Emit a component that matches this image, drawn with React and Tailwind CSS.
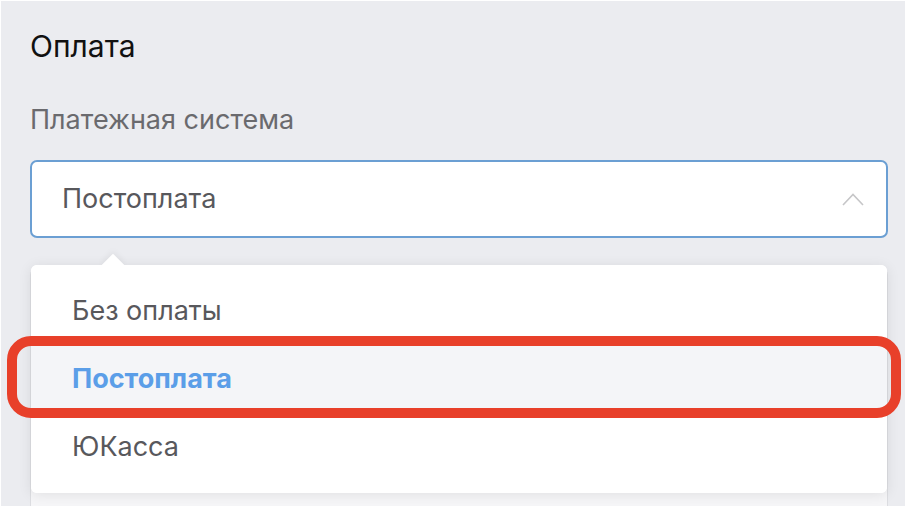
import React from 'react';

const options = ['Без оплаты', 'Постоплата', 'ЮКасса'];

const App = () => {
    const selected = 'Постоплата';

    return (
        <div
            className="h-[506px] w-[908px] overflow-hidden bg-white pt-px pr-[3px] pl-px"
            style={{ fontFamily: 'Inter, "Noto Sans", sans-serif' }}
        >
            <div className="relative h-full bg-[#ebecf0] pl-[29px] pr-[17px]">
                <h2 className="pt-[28px] text-[30px] leading-[34px] text-[#111]">Оплата</h2>

                <div className="mt-[41px] text-[27px] leading-[32px] text-[#6a6a6e]">Платежная система</div>

                {/* select */}
                <div className="mt-[24px] flex h-[78px] items-center justify-between rounded-[7px] border-2 border-[#6b9fd3] bg-white pl-[30px] pr-[22px]">
                    <span className="text-[27px] text-[#58585c]">{selected}</span>
                    <svg width="22" height="13" viewBox="0 0 22 13" fill="none">
                        <polyline points="1,12 11,1.5 21,12" stroke="#c6c6c8" strokeWidth="1.6" />
                    </svg>
                </div>

                {/* field underneath the dropdown */}
                <div className="mt-[30px] h-[300px] rounded-[7px] border border-[#dcdde1] bg-[#f6f6f8]"></div>

                {/* dropdown */}
                <div className="absolute left-[30px] top-[264px] w-[856px] rounded-[6px] bg-white shadow-[0_2px_14px_rgba(0,0,0,0.09)]">
                    <div className="absolute left-[74px] top-[-8px] h-4 w-4 rotate-45 bg-white shadow-[-2px_-2px_6px_rgba(0,0,0,0.05)]"></div>
                    <div className="relative rounded-[6px] bg-white py-[12px]">
                        {options.map((o) => (
                            <div
                                key={o}
                                className={
                                    o === selected
                                        ? 'flex h-[68px] items-center bg-[#f4f5f8] pl-[41px] text-[27px] font-bold text-[#5b9ee8]'
                                        : 'flex h-[68px] items-center pl-[41px] text-[27px] text-[#58585c]'
                                }
                            >
                                {o}
                            </div>
                        ))}
                    </div>
                </div>

                {/* annotation */}
                <div className="absolute left-[6px] top-[335px] h-[82px] w-[894px] rounded-[24px] border-[10px] border-[#e8402a]"></div>
            </div>
        </div>
    );
};

export default App;
